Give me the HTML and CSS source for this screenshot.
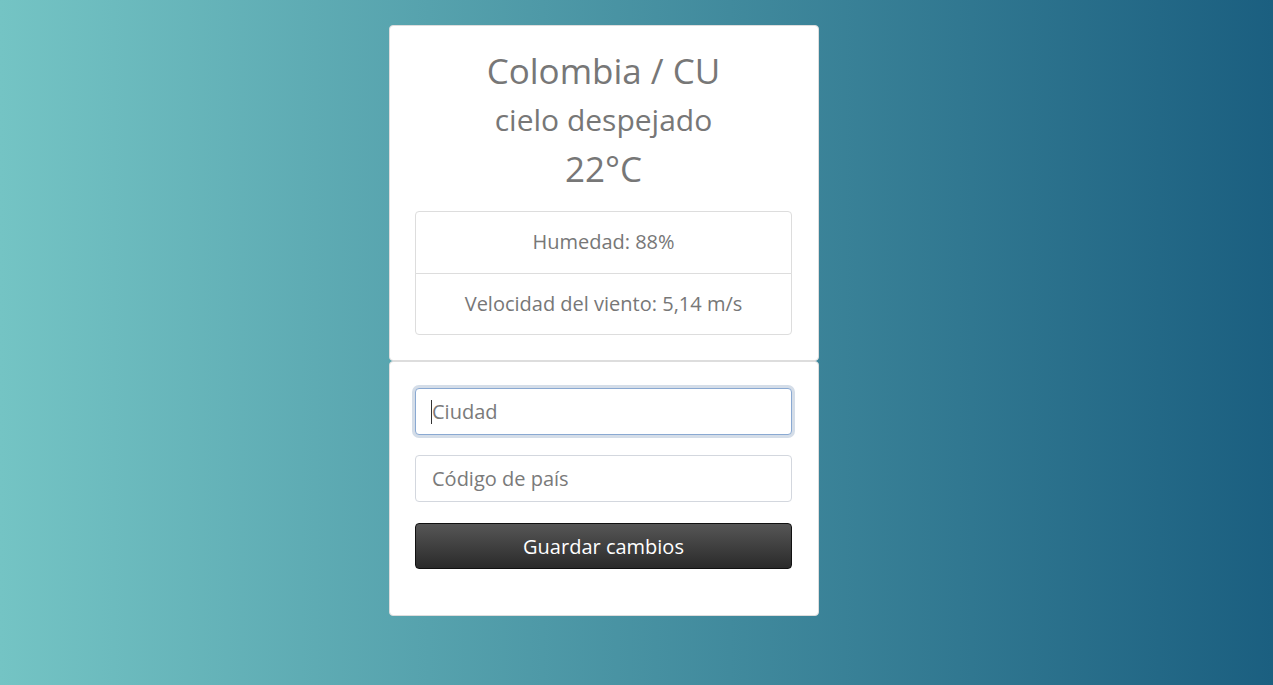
FILE: index.html
```html
<!DOCTYPE html>
<html lang="es">
<head>
<meta charset="utf-8">
<title>Clima</title>
<link rel="stylesheet" href="styles.css">
</head>
<body>
<div class="page">
  <div class="column">
    <section class="card weather">
      <h1 class="city">Colombia / CU</h1>
      <h2 class="desc">cielo despejado</h2>
      <h1 class="temp">22°C</h1>
      <ul class="list">
        <li class="item">Humedad: 88%</li>
        <li class="item">Velocidad del viento: 5,14 m/s</li>
      </ul>
    </section>
    <section class="card form">
      <div class="field-wrap">
        <input class="field is-focused" type="text" placeholder="Ciudad">
        <span class="caret"></span>
      </div>
      <input class="field" type="text" placeholder="Código de país">
      <button class="btn" type="button">Guardar cambios</button>
    </section>
  </div>
</div>
</body>
</html>
```
FILE: styles.css
```css
html, body {
  height: 100%;
}
body {
  margin: 0;
  font-family: "Open Sans", "Liberation Sans", sans-serif;
  color: #777;
  background: linear-gradient(to right, #74c4c4, #1b5f80);
}
.page {
  padding-top: 25px;
  padding-left: 389px;
}
.column {
  width: 430px;
  display: flex;
  flex-direction: column;
}
.card {
  background: #fff;
  border: 1px solid #ddd;
  border-radius: 4px;
  box-sizing: border-box;
  padding: 25px 26px 25px 25px;
}
.weather {
  display: flex;
  flex-direction: column;
  align-items: stretch;
  text-align: center;
}
.city, .desc, .temp {
  margin: 0;
  font-weight: 400;
  color: #777;
}
.city {
  font-size: 35px;
  line-height: 40px;
}
.desc {
  font-size: 30px;
  line-height: 33px;
  margin-top: 12px;
}
.temp {
  font-size: 35px;
  line-height: 40px;
  margin-top: 13px;
}
.list {
  list-style: none;
  margin: 22px 0 0;
  padding: 0;
}
.item {
  font-size: 20px;
  line-height: 26.5px;
  padding: 17px 15px;
  border: 1px solid #ddd;
  margin-bottom: -1px;
  color: #777;
}
.item:first-child {
  border-radius: 4px 4px 0 0;
}
.item:last-child {
  border-radius: 0 0 4px 4px;
  margin-bottom: 0;
}
.form {
  display: flex;
  flex-direction: column;
  gap: 20px;
  padding-top: 26px;
  padding-bottom: 46px;
}
.field-wrap {
  position: relative;
  display: flex;
  flex-direction: column;
}
.field {
  height: 47px;
  box-sizing: border-box;
  padding: 10px 16px;
  font-family: "Open Sans", "Liberation Sans", sans-serif;
  font-size: 20px;
  color: #555;
  border: 1px solid #d3d7de;
  border-radius: 4px;
  outline: none;
  background: #fff;
}
.field::placeholder {
  color: #7a7a7a;
}
.field.is-focused, .field:focus {
  border-color: #8aa9d2;
  box-shadow: 0 0 0 3px #d4dde8;
}
.caret {
  position: absolute;
  left: 16px;
  top: 12px;
  width: 1px;
  height: 24px;
  background: #333;
}
.btn {
  margin-top: 1px;
  height: 46px;
  font-family: "Open Sans", "Liberation Sans", sans-serif;
  font-size: 20px;
  color: #fff;
  border: 1px solid #111;
  border-radius: 4px;
  background: linear-gradient(to bottom, #565656, #2a2a2a);
  cursor: pointer;
}
```
